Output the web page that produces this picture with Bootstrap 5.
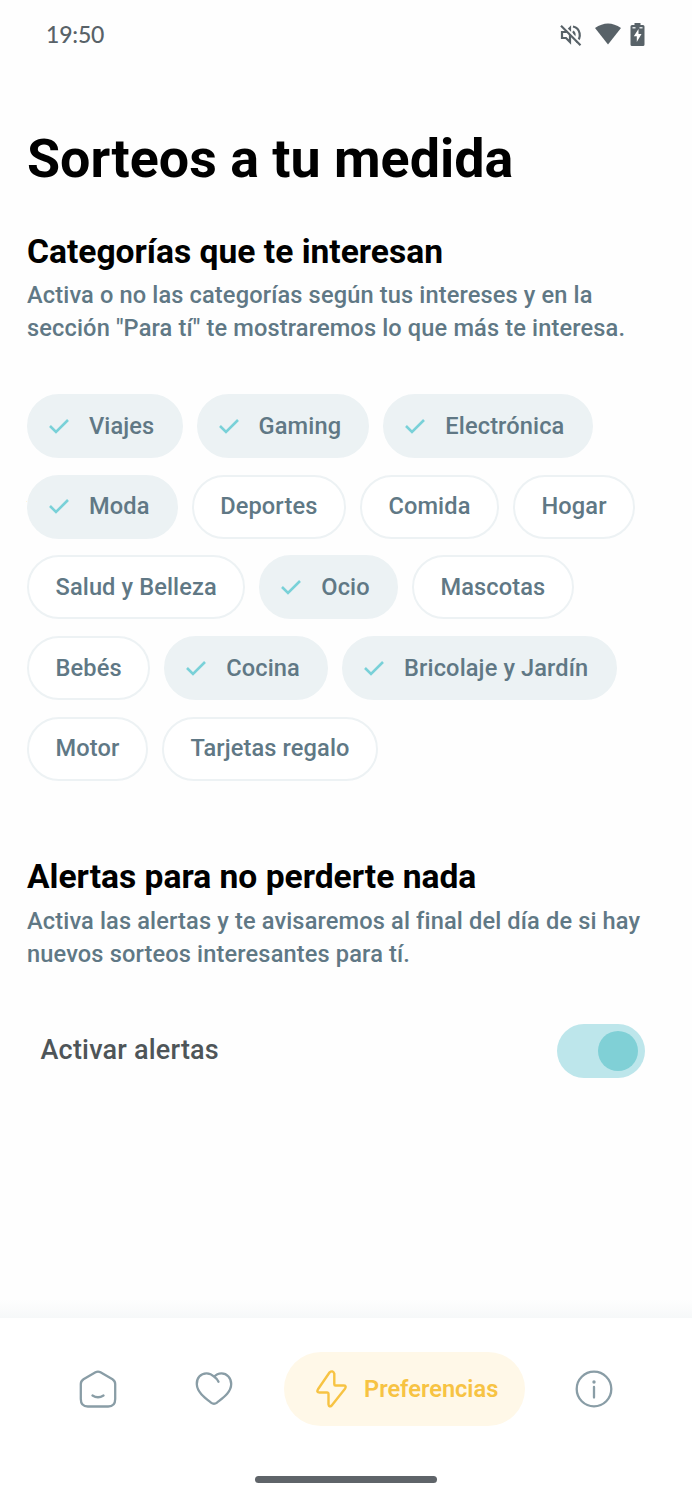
<!DOCTYPE html>
<html lang="es">
<head>
<meta charset="utf-8">
<meta name="viewport" content="width=device-width, initial-scale=1">
<title>Sorteos a tu medida</title>
<link href="https://cdn.jsdelivr.net/npm/bootstrap@5.3.0/dist/css/bootstrap.min.css" rel="stylesheet">
<style>
body{font-family:Roboto,sans-serif;background:#fefefe;color:#000}
.screen{height:1500px;overflow:hidden}
svg{display:block;flex:none}
.status{height:70px;padding:0 47px 0 46px;color:#586268}
.clock{font:500 23px/1 Lato,sans-serif;letter-spacing:-.2px;margin-top:-1px}
main{padding:57px 27px 0}
h1{font-size:53.8px;font-weight:700;line-height:64px;letter-spacing:0;margin:0}
h2{font-size:33.6px;font-weight:700;line-height:40px;margin:0}
.lead-copy{font-size:23.6px;font-weight:500;line-height:33.4px;color:#607885;letter-spacing:.14px;white-space:nowrap;margin:0}
.chips{gap:16.700px 14px}
.chip{height:64px;padding:1px 26.500px 0;border:2px solid #edf2f4;border-radius:32px;background:#fff;color:#607885;font-size:23.6px;font-weight:500;letter-spacing:.12px;line-height:1;white-space:nowrap}
.chip.on{background:#ecf2f4;border-color:#ecf2f4;padding-left:20px;padding-right:26.200px;gap:20px}
.chip.on svg{margin-top:-2px}
.alert-row{padding:0 0 0 13.500px;height:54px}
.alert-label{font-size:27px;font-weight:500;color:#4e5558;letter-spacing:.2px;margin-top:-2px}
.toggle{width:88px;height:54px;border-radius:27px;background:#bde6eb;padding-right:7px}
.knob{width:40px;height:40px;border-radius:50%;background:#80d0d6}
.fade-edge{height:18px;background:linear-gradient(#fefefe,#f6f8f9)}
.tabs{height:182px;background:#fff}
.tabs-row{padding:34px 79px 0 78.500px;height:108px}
.pill{width:242px;height:74px;border-radius:37px;background:#fff8e8;color:#f7c343;font-size:23.6px;font-weight:600;padding-left:32px;gap:17.500px;margin:0 50px 0 51px}
.pill span{margin-top:2px}
.handle{width:182px;height:7px;border-radius:4px;background:#5f6469;margin-top:50px}
</style>
</head>
<body>
<div class="screen d-flex flex-column">
  <header class="status d-flex align-items-center justify-content-between">
    <span class="clock">19:50</span>
    <div class="d-flex align-items-center">
      <svg width="22" height="22" viewBox="0 0 22 22" fill="none" stroke="#586268" stroke-width="2.200"><path d="M2 8h4l4-4v14l-4-4H2z"/><path d="M13 2.500a8.600 8.600 0 0 1 3 15.500M13 7.300q3 3.500 0 7"/><path d="M2.500.8 22 20.300" stroke="#fefefe"/><path d="M1 1.700 20.500 21.200"/></svg>
      <svg style="margin-left:13px;margin-right:9px;margin-top:-2px" width="26" height="22" viewBox="0 0 26 22"><path d="M0 5Q13-4 26 5L13 21.500z" fill="#586268"/></svg>
      <svg style="margin-top:-1px" width="15" height="23" viewBox="0 0 15 23"><path d="M4.500 0h6v2H13q1.500 0 1.500 1.500v18Q14.500 23 13 23H2Q.5 23 .5 21.500v-18Q.5 2 2 2h2.500z" fill="#586268"/><path d="M2.500 4h3v1.500h-3zM9.500 4h3v1.500h-3z" fill="#dfe3e5"/><path d="M8.500 6 3.800 13.300h3V19l4.700-8H8.500z" fill="#fff"/></svg>
    </div>
  </header>
  <main class="flex-grow-1">
    <h1>Sorteos a tu medida</h1>
    <h2 style="margin-top:41px">Categorías que te interesan</h2>
    <p class="lead-copy" style="margin-top:7px">Activa o no las categorías según tus intereses y en la<br>sección "Para tí" te mostraremos lo que más te interesa.</p>
    <div class="chips d-flex flex-column" style="margin-top:48.200px"></div>
    <h2 style="margin-top:76.500px">Alertas para no perderte nada</h2>
    <p class="lead-copy" style="margin-top:7.500px">Activa las alertas y te avisaremos al final del día de si hay<br>nuevos sorteos interesantes para tí.</p>
    <div class="alert-row d-flex align-items-center justify-content-between" style="margin-top:52.500px;margin-right:20px">
      <span class="alert-label">Activar alertas</span>
      <span class="toggle d-flex align-items-center justify-content-end" role="switch" aria-checked="true"><span class="knob"></span></span>
    </div>
  </main>
  <div class="fade-edge"></div>
  <nav class="tabs">
    <div class="tabs-row d-flex align-items-center">
      <svg width="38" height="38" viewBox="0 0 38 38" fill="none" stroke="#899da6" stroke-width="2.300" stroke-linecap="round"><path d="M16.500 2.300 4.500 9.200Q1.800 11 1.800 14v15q0 7.500 7 7.500h20.400q7 0 7-7.500V14q0-3-2.700-4.800L21.500 2.300q-2.500-1.400-5 0zM13.500 25.500q5.500 3.500 11 0"/></svg>
      <svg style="margin-left:78px" width="38" height="38" viewBox="0 0 38 38" fill="none" stroke="#899da6" stroke-width="2.300" stroke-linecap="round"><path d="M23.500 11.800C22.500 9.500 21 8 19.200 6.800 17 4.500 14.500 3.300 11.500 3.300c-6 0-10 5-9.700 11 .4 8 8 13.500 14.200 18.300q3 2.300 6 0C28 27.800 36.200 22.300 36.200 14c0-6-4.200-10.700-9.700-10.700-3 0-5.500 1.200-7.300 3.500"/></svg>
      <div class="pill d-flex align-items-center">
        <svg width="31" height="38" viewBox="0 0 31 38" fill="none" stroke="#f7c343" stroke-width="2.400" stroke-linejoin="round"><path d="M13.500 2.500 2 19.300q-1.800 3.200 1.500 3.200h7.800q1.200 0 1.200 1.300v10.500q.5 3.500 3.200 1.200L29 18.700q1.800-3.200-1.500-3.200h-8q-1.200 0-1.200-1.300V3.700q-1.500-4-4.800-1.200z"/></svg>
        <span>Preferencias</span>
      </div>
      <svg width="38" height="38" viewBox="0 0 38 38" fill="none" stroke="#899da6" stroke-width="2.300" stroke-linecap="round"><circle cx="19" cy="19" r="17.300"/><path d="M19 17v10.500"/><circle cx="19" cy="12" r="1.700" fill="#899da6" stroke="none"/></svg>
    </div>
    <div class="handle mx-auto"></div>
  </nav>
</div>
<script src="https://cdn.jsdelivr.net/npm/bootstrap@5.3.0/dist/js/bootstrap.bundle.min.js"></script>
<script>
const lines = [
  [['Viajes',1],['Gaming',1],['Electrónica',1]],
  [['Moda',1],['Deportes',0],['Comida',0],['Hogar',0]],
  [['Salud y Belleza',0],['Ocio',1],['Mascotas',0]],
  [['Bebés',0],['Cocina',1],['Bricolaje y Jardín',1]],
  [['Motor',0],['Tarjetas regalo',0]]
];
const check = '<svg width="20" height="16" viewBox="0 0 20 16" fill="none" stroke="#79d1d8" stroke-width="2.600"><path d="M1 8 7 14 19 2"/></svg>';
document.querySelector('.chips').innerHTML = lines.map(l =>
  '<div class="d-flex" style="gap:14px">' + l.map(([t, on]) =>
    `<span class="chip d-inline-flex align-items-center${on ? ' on' : ''}">${on ? check : ''}<span>${t}</span></span>`).join('') + '</div>').join('');
</script>
</body>
</html>
